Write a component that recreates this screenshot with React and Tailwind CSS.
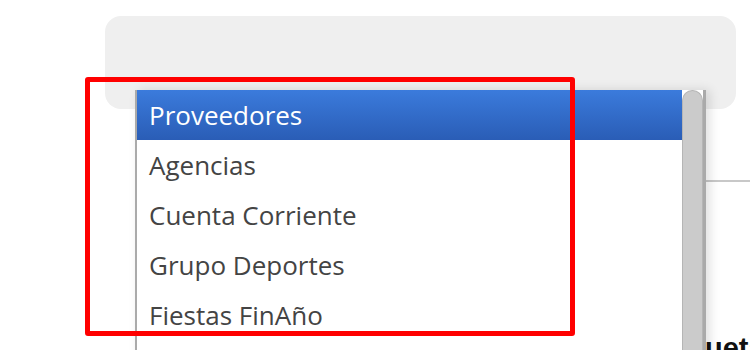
export default function App() {
  const items = ["Proveedores", "Agencias", "Cuenta Corriente", "Grupo Deportes", "Fiestas FinAño", "Otros"];
  return (
    <div className="relative w-[750px] h-[350px] overflow-hidden bg-white" style={{ fontFamily: '"Open Sans", sans-serif' }}>
      <div className="pl-[105px] pt-[16px] pr-[14px]">
        <div className="h-[93px] rounded-[16px] bg-[#efefef]" />
      </div>
      <div className="flex justify-end pt-[71px]">
        <div className="w-[44px] h-[2px] bg-[#c8c8c8]" />
      </div>
      <div className="absolute left-[705px] top-[334px] text-[29px] font-bold text-[#111] leading-none whitespace-nowrap" style={{ fontFamily: '"Liberation Sans", sans-serif' }}>uetas</div>
      <div className="absolute left-[135px] top-[90px] w-[571px] h-[280px] bg-white border-l-2 border-r-[3px] border-[#aaaaaa] shadow-[4px_0_10px_rgba(0,0,0,0.12)] flex">
        <div className="flex-1 flex flex-col">
          {items.map((t, i) => (
            <div
              key={t}
              className={
                "h-[50px] shrink-0 flex items-center pl-[12px] text-[26px] " +
                (i === 0 ? "bg-gradient-to-b from-[#3b7bdc] to-[#2a5db6] text-white" : "text-[#444444]")
              }
            >
              {t}
            </div>
          ))}
        </div>
        <div className="w-[21px] flex flex-col">
          <div className="w-[21px] h-[300px] bg-[#cbcbcb] rounded-t-[11px] border-t border-x border-[#b5b5b5]" />
        </div>
      </div>
      <div className="absolute left-[85px] top-[77px] w-[490px] h-[259px] border-[5px] border-[#ff0000] rounded-[3px]" />
    </div>
  );
}
